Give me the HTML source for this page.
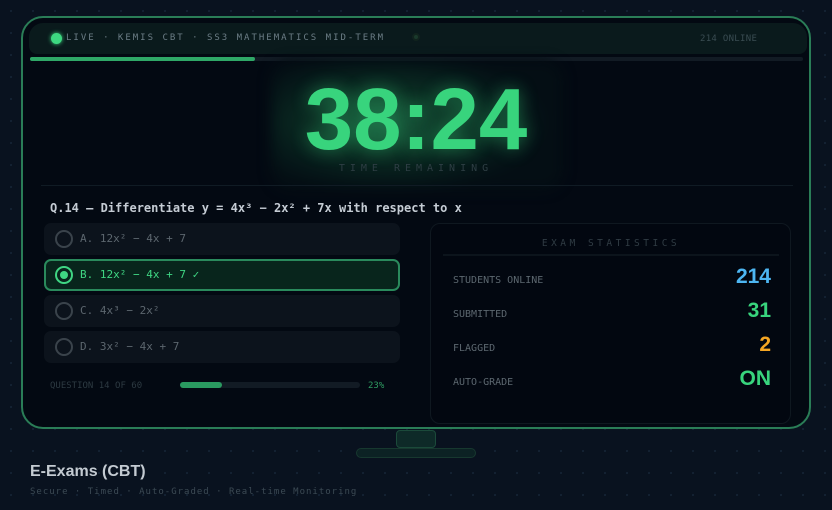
<!DOCTYPE html>
<html><head><style>
*{margin:0;padding:0;box-sizing:border-box}
body{width:832px;height:510px;overflow:hidden;background:#09121f;background-image:radial-gradient(circle,#142233 1px,transparent 1.2px);background-size:22px 22px;font-family:"DejaVu Sans Mono","Liberation Mono",monospace;position:relative}
.mon{position:absolute;left:21px;top:16px;width:790px;height:413px;border:2px solid #2a7d57;border-radius:22px;background:#030912}
.hdr{position:absolute;left:6px;top:5px;width:778px;height:31px;background:#0a1a1c;border-radius:14px 14px 8px 8px}
.dot{position:absolute;left:22px;top:10px;width:11px;height:11px;border-radius:50%;background:#3dd881;box-shadow:0 0 4px #3dd881}
.htxt{position:absolute;left:37px;top:10px;font-size:9px;letter-spacing:2px;color:#6c7d86}
.led{position:absolute;left:383px;top:10px;width:8px;height:8px;border-radius:50%;background:#1a3a2c;border:2px solid #11231e}
.onl{position:absolute;left:671px;top:11px;font-size:9px;color:#3a4c52;letter-spacing:.3px}
.bar{position:absolute;left:7px;top:39px;width:773px;height:4px;background:#121b24;border-radius:2px}
.bar i{display:block;width:225px;height:4px;background:#2fa867;border-radius:2px}
.glow{position:absolute;left:248px;top:42px;width:292px;height:130px;border-radius:20px;background:radial-gradient(ellipse 55% 55% at 40% 48%,#17553a 0%,#0c3024 40%,#061a1a 75%,#040e14 100%);filter:blur(6px)}
.time{position:absolute;left:0;width:786px;top:52px;text-align:center;font-family:"Liberation Sans",sans-serif;font-weight:bold;font-size:87px;color:#38d47d;text-shadow:0 0 18px rgba(56,212,125,.45)}
.tr{position:absolute;left:0;width:786px;top:145px;text-align:center;font-size:10px;letter-spacing:5px;color:#2e3e44}
.div{position:absolute;left:18px;top:167px;width:752px;height:1px;background:#101b24}
.q{position:absolute;left:27px;top:183px;font-weight:bold;font-size:12px;color:#c5ccd4}
.opt{position:absolute;left:21px;width:356px;height:32px;border-radius:7px;background:#0c131c;font-size:11px;color:#5c666e}
.opt .r{position:absolute;left:11px;top:7px;width:18px;height:18px;border-radius:50%;border:2px solid #3a434b}
.opt span{position:absolute;left:36px;top:9px}
.opt.s{background:#08251c;border:2px solid #2a8a5c;color:#3fd683}
.opt.s .r{left:9px;top:5px;border-color:#3fd683}
.opt.s .r:after{content:"";position:absolute;left:3px;top:3px;width:8px;height:8px;border-radius:50%;background:#3fd683}
.opt.s span{left:34px;top:7px}
.qn{position:absolute;left:27px;top:363px;font-size:9px;color:#2d3a42}
.pb{position:absolute;left:157px;top:364px;width:180px;height:6px;background:#121b24;border-radius:3px}
.pb i{display:block;width:42px;height:6px;background:#2a9a60;border-radius:3px}
.pct{position:absolute;left:345px;top:363px;font-size:9px;color:#2f9b62}
.st{position:absolute;left:407px;top:205px;width:361px;height:201px;border:1px solid #0f1820;border-radius:10px;background:#020710}
.sh{position:absolute;left:12px;top:14px;width:336px;text-align:center;font-size:9.5px;letter-spacing:3.5px;color:#303c44;padding-bottom:5px;border-bottom:2px solid #0c141c}
.row{position:absolute;left:22px;width:318px}
.row b{font-weight:normal;font-size:10px;color:#5c676f;position:absolute;left:0;bottom:3px}
.row em{font-style:normal;font-family:"Liberation Sans",sans-serif;font-weight:bold;font-size:21px;position:absolute;right:0;bottom:0}
.neck{position:absolute;left:396px;top:430px;width:40px;height:18px;border:1px solid #1b4a3a;background:#0e2a28;border-radius:4px}
.base{position:absolute;left:356px;top:448px;width:120px;height:10px;border:1px solid #17382f;background:#0c2224;border-radius:5px}
.t1{position:absolute;left:30px;top:463px;font-family:"Liberation Sans",sans-serif;font-weight:bold;font-size:16px;color:#c4cbd2}
.t2{position:absolute;left:30px;top:487px;font-size:9px;letter-spacing:1px;color:#3c4a54}
</style></head><body>
<div class="mon">
<div class="hdr"><div class="dot"></div><div class="htxt">LIVE · KEMIS CBT · SS3 MATHEMATICS MID-TERM</div><div class="led"></div><div class="onl">214 ONLINE</div></div>
<div class="bar"><i></i></div>
<div class="glow"></div>
<div class="time">38:24</div>
<div class="tr">TIME REMAINING</div>
<div class="div"></div>
<div class="q">Q.14 — Differentiate y = 4x³ − 2x² + 7x with respect to x</div>
<div class="opt" style="top:205px"><div class="r"></div><span>A. 12x² − 4x + 7</span></div>
<div class="opt s" style="top:241px"><div class="r"></div><span>B. 12x² − 4x + 7 ✓</span></div>
<div class="opt" style="top:277px"><div class="r"></div><span>C. 4x³ − 2x²</span></div>
<div class="opt" style="top:313px"><div class="r"></div><span>D. 3x² − 4x + 7</span></div>
<div class="qn">QUESTION 14 OF 60</div>
<div class="pb"><i></i></div>
<div class="pct">23%</div>
<div class="st">
<div class="sh">EXAM STATISTICS</div>
<div class="row" style="top:40px;height:25px"><b>STUDENTS ONLINE</b><em style="color:#4db6f2">214</em></div>
<div class="row" style="top:74px;height:25px"><b>SUBMITTED</b><em style="color:#38d47d">31</em></div>
<div class="row" style="top:108px;height:25px"><b>FLAGGED</b><em style="color:#f5a623">2</em></div>
<div class="row" style="top:142px;height:25px"><b>AUTO-GRADE</b><em style="color:#38d47d">ON</em></div>
</div>
</div>
<div class="neck"></div><div class="base"></div>
<div class="t1">E-Exams (CBT)</div>
<div class="t2">Secure · Timed · Auto-Graded · Real-time Monitoring</div>
</body></html>
